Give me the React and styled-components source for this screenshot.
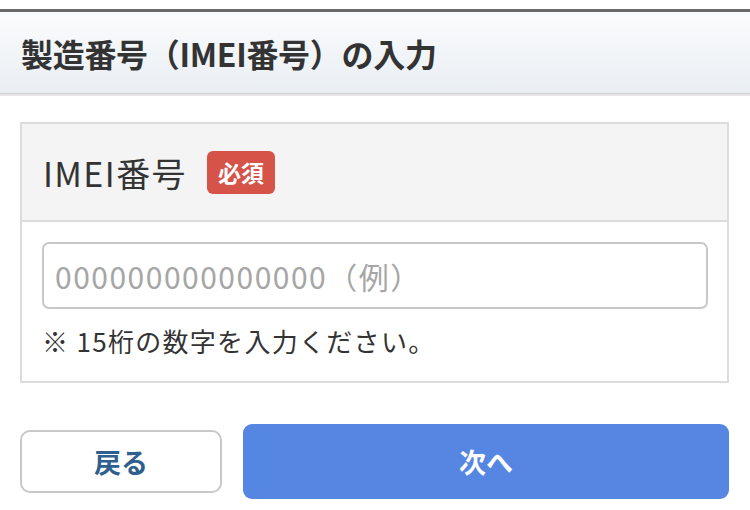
import React from 'react'
import styled, { createGlobalStyle } from 'styled-components'

const GlobalStyle = createGlobalStyle`
    body {
        margin: 0;
        background: #ffffff;
        font-family: "Noto Sans CJK JP", "Noto Sans", sans-serif;
        color: #333333;
    }
`;

const Page = styled.div`
    width: 750px;
    padding-top: 9px;
`;

const TopBar = styled.div`
    height: 3px;
    background: #6a6a6a;
`;

const Header = styled.header`
    height: 81px;
    display: flex;
    align-items: center;
    padding-left: 21px;
    background: linear-gradient(#fbfcfd, #e9eef3);
    border-bottom: 1px solid #d0d0d0;
    box-shadow: 0 2px 0 #e6e6e6;
`;

const Title = styled.h1`
    margin: 0;
    font-size: 32px;
    font-weight: 700;
    color: #333333;
    letter-spacing: -0.3px;
`;

const Main = styled.main`
    padding: 28px 21px 0 20px;
`;

const Card = styled.section`
    border: 2px solid #dcdcdc;
    background: #ffffff;
`;

const CardHeader = styled.div`
    height: 96px;
    display: flex;
    align-items: center;
    gap: 20px;
    padding-left: 21px;
    background: #f4f4f4;
    border-bottom: 2px solid #dcdcdc;
`;

const Label = styled.span`
    font-size: 34px;
    letter-spacing: 1.4px;
    color: #333333;
`;

const Badge = styled.span`
    display: flex;
    align-items: center;
    justify-content: center;
    width: 68px;
    height: 43px;
    border-radius: 6px;
    background: #d6534a;
    color: #ffffff;
    font-size: 23px;
    font-weight: 700;
`;

const CardBody = styled.div`
    padding: 20px 19px 23px 20px;
`;

const Input = styled.input`
    box-sizing: border-box;
    width: 100%;
    height: 67px;
    border: 2px solid #c8c8c8;
    border-radius: 7px;
    padding: 0 11px;
    font-family: inherit;
    font-size: 30px;
    letter-spacing: 1.5px;
    color: #333333;
    outline: none;

    &::placeholder {
        color: #a6a6a6;
    }
`;

const Note = styled.p`
    margin: 15px 0 0;
    font-size: 26px;
    letter-spacing: 1.3px;
    line-height: 34px;
    color: #333333;
`;

const Buttons = styled.div`
    display: flex;
    align-items: center;
    gap: 21px;
    margin-top: 41px;
`;

const BackButton = styled.button`
    width: 202px;
    height: 63px;
    border: 2px solid #c8c8c8;
    border-radius: 10px;
    background: #ffffff;
    color: #2f5f8e;
    font-family: inherit;
    font-size: 27px;
    font-weight: 700;
`;

const NextButton = styled.button`
    flex: 1;
    height: 75px;
    border: none;
    border-radius: 9px;
    background: #5586e1;
    color: #ffffff;
    font-family: inherit;
    font-size: 27px;
    font-weight: 700;
`;

export default () => (
    <Page>
        <GlobalStyle />
        <TopBar />
        <Header>
            <Title>製造番号（IMEI番号）の入力</Title>
        </Header>
        <Main>
            <Card>
                <CardHeader>
                    <Label>IMEI番号</Label>
                    <Badge>必須</Badge>
                </CardHeader>
                <CardBody>
                    <Input placeholder="000000000000000（例）" />
                    <Note>※ 15桁の数字を入力ください。</Note>
                </CardBody>
            </Card>
            <Buttons>
                <BackButton>戻る</BackButton>
                <NextButton>次へ</NextButton>
            </Buttons>
        </Main>
    </Page>
);
